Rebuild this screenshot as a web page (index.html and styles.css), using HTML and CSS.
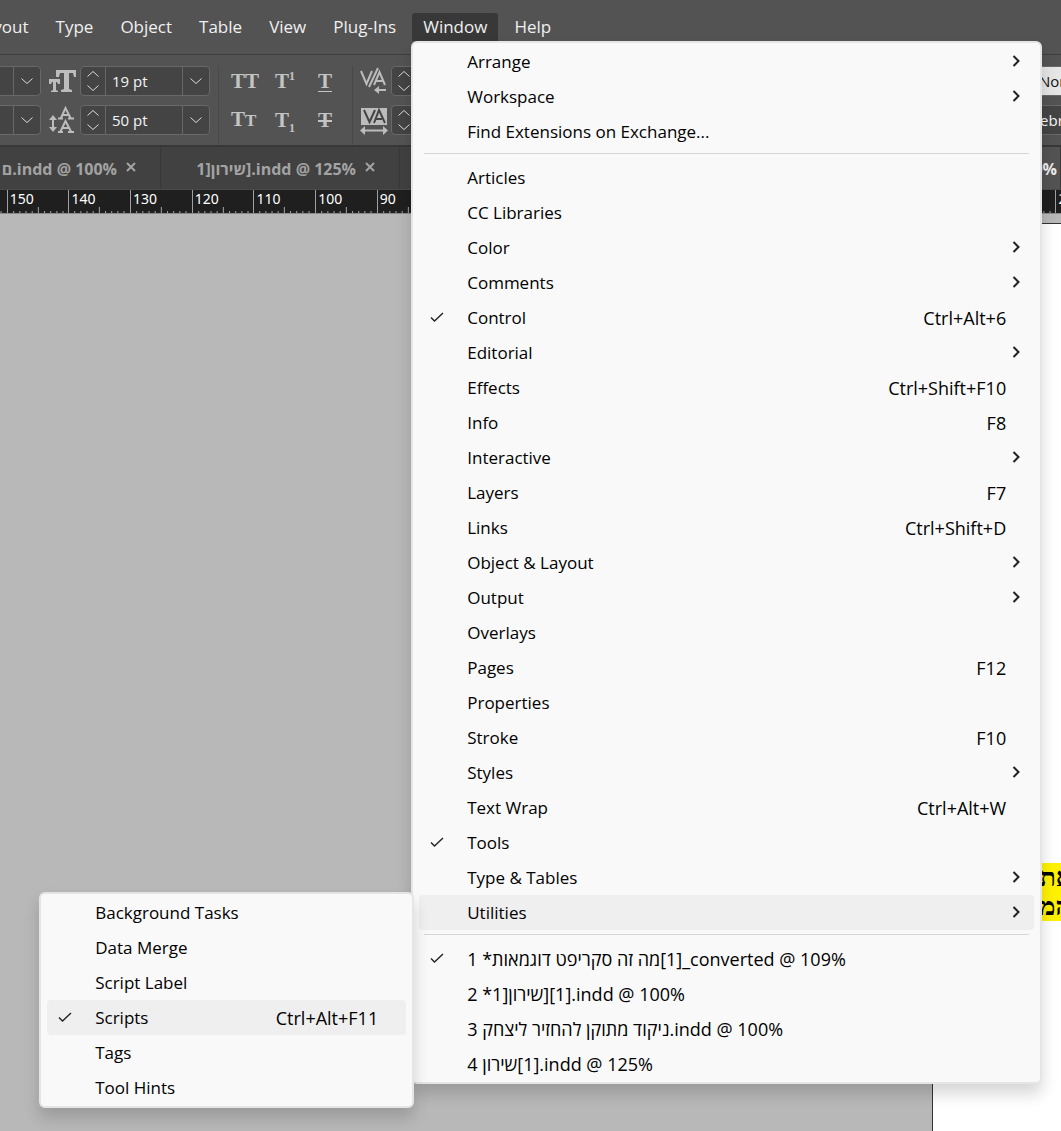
FILE: index.html
```
<!DOCTYPE html>
<html lang="en">

<head>
    <meta charset="UTF-8">
    <title>Window menu</title>
    <link rel="stylesheet" href="styles.css">
</head>

<body>
    <svg class="defs" aria-hidden="true">
        <symbol id="down" viewBox="0 0 14 8"><path d="M1.5 1.5 7 6.5l5.500-5" /></symbol>
        <symbol id="up" viewBox="0 0 14 8"><path d="M1.500 6.500 7 1.500l5.500 5" /></symbol>
        <symbol id="right" viewBox="0 0 8 12"><path d="M1.500 1 6.500 6l-5 5" /></symbol>
        <symbol id="check" viewBox="0 0 14 10"><path d="M1 5.500 4.500 9 13 1" /></symbol>
        <symbol id="close" viewBox="0 0 10 10"><path d="M1 1l8 8M9 1 1 9" /></symbol>
        <symbol id="ticks" viewBox="0 0 60 24" preserveAspectRatio="none">
            <path d="M.5 0v24M6.500 21v3M12.500 21v3M18.500 21v3M24.500 21v3M30.500 17v7M36.500 21v3M42.500 21v3M48.500 21v3M54.500 21v3" />
        </symbol>
    </svg>

    <nav class="menubar">
        <ul class="menubar-list">
            <li class="menubar-item"><button type="button">Layout</button></li>
            <li class="menubar-item"><button type="button">Type</button></li>
            <li class="menubar-item"><button type="button">Object</button></li>
            <li class="menubar-item"><button type="button">Table</button></li>
            <li class="menubar-item"><button type="button">View</button></li>
            <li class="menubar-item"><button type="button">Plug-Ins</button></li>
            <li class="menubar-item open"><button type="button">Window</button>
                <ul class="menu window-menu">
                    <li><button type="button">Arrange<svg class="arrow"><use href="#right" /></svg></button></li>
                    <li><button type="button">Workspace<svg class="arrow"><use href="#right" /></svg></button></li>
                    <li><button type="button">Find Extensions on Exchange...</button></li>
                    <li class="separator"></li>
                    <li><button type="button">Articles</button></li>
                    <li><button type="button">CC Libraries</button></li>
                    <li><button type="button">Color<svg class="arrow"><use href="#right" /></svg></button></li>
                    <li><button type="button">Comments<svg class="arrow"><use href="#right" /></svg></button></li>
                    <li><button type="button"><svg class="check"><use href="#check" /></svg>Control<kbd>Ctrl+Alt+6</kbd></button></li>
                    <li><button type="button">Editorial<svg class="arrow"><use href="#right" /></svg></button></li>
                    <li><button type="button">Effects<kbd>Ctrl+Shift+F10</kbd></button></li>
                    <li><button type="button">Info<kbd>F8</kbd></button></li>
                    <li><button type="button">Interactive<svg class="arrow"><use href="#right" /></svg></button></li>
                    <li><button type="button">Layers<kbd>F7</kbd></button></li>
                    <li><button type="button">Links<kbd>Ctrl+Shift+D</kbd></button></li>
                    <li><button type="button">Object &amp; Layout<svg class="arrow"><use href="#right" /></svg></button></li>
                    <li><button type="button">Output<svg class="arrow"><use href="#right" /></svg></button></li>
                    <li><button type="button">Overlays</button></li>
                    <li><button type="button">Pages<kbd>F12</kbd></button></li>
                    <li><button type="button">Properties</button></li>
                    <li><button type="button">Stroke<kbd>F10</kbd></button></li>
                    <li><button type="button">Styles<svg class="arrow"><use href="#right" /></svg></button></li>
                    <li><button type="button">Text Wrap<kbd>Ctrl+Alt+W</kbd></button></li>
                    <li><button type="button"><svg class="check"><use href="#check" /></svg>Tools</button></li>
                    <li><button type="button">Type &amp; Tables<svg class="arrow"><use href="#right" /></svg></button></li>
                    <li class="active"><button type="button">Utilities<svg class="arrow"><use href="#right" /></svg></button>
                        <ul class="menu submenu">
                            <li><button type="button">Background Tasks</button></li>
                            <li><button type="button">Data Merge</button></li>
                            <li><button type="button">Script Label</button></li>
                            <li class="active"><button type="button"><svg class="check"><use href="#check" /></svg>Scripts<kbd>Ctrl+Alt+F11</kbd></button></li>
                            <li><button type="button">Tags</button></li>
                            <li><button type="button">Tool Hints</button></li>
                        </ul>
                    </li>
                    <li class="separator"></li>
                    <li class="document"><button type="button"><svg class="check"><use href="#check" /></svg><span>1 *<bdi>מה זה סקריפט דוגמאות</bdi>[1]_converted @ 109%</span></button></li>
                    <li class="document"><button type="button"><span>2 *1]<bdi>שירון</bdi>][1].indd @ 100%</span></button></li>
                    <li class="document"><button type="button"><span>3 <bdi>ניקוד מתוקן להחזיר ליצחק</bdi>.indd @ 100%</span></button></li>
                    <li class="document"><button type="button"><span>4 <bdi>שירון</bdi>[1].indd @ 125%</span></button></li>
                </ul>
            </li>
            <li class="menubar-item"><button type="button">Help</button></li>
        </ul>
    </nav>

    <div class="toolbar">
        <div class="group fonts">
            <div class="field"><input type="text" aria-label="Font"><button type="button" aria-label="Choose font"><svg class="chevron"><use href="#down" /></svg></button></div>
            <div class="field"><input type="text" aria-label="Font style"><button type="button" aria-label="Choose style"><svg class="chevron"><use href="#down" /></svg></button></div>
        </div>
        <div class="group sizes">
            <div class="row">
                <label for="size" aria-label="Font size">
                    <svg class="icon" viewBox="0 0 28 28">
                        <path d="M8 3h20v7h-2l-1-4h-4v16l3 1v2h-11v-2l3-1V6h-4l-1 4H8z" />
                        <path d="M1 12h11v5h-2l-1-2H8v8l2 1v1H3v-1l2-1v-8H4l-1 2H1z" />
                    </svg>
                </label>
                <div class="field">
                    <span class="spin"><button type="button" aria-label="Larger"><svg class="chevron"><use href="#up" /></svg></button><button type="button" aria-label="Smaller"><svg class="chevron"><use href="#down" /></svg></button></span>
                    <input type="text" id="size" value="19 pt">
                    <button type="button" aria-label="Choose size"><svg class="chevron"><use href="#down" /></svg></button>
                </div>
            </div>
            <div class="row">
                <label for="leading" aria-label="Leading">
                    <svg class="icon" viewBox="0 0 28 28">
                        <path d="M5 9 9 14H6v7h3l-4 5-4-5h3v-7H1z" />
                        <path class="line" d="M10 12.500h5M20 12.500h6M10 26h5M20 26h6M13 12 17.500 2 22.500 12M14.500 9h6M12.500 25.500 17.500 15 23 25.500M14 22h7" />
                    </svg>
                </label>
                <div class="field">
                    <span class="spin"><button type="button" aria-label="More"><svg class="chevron"><use href="#up" /></svg></button><button type="button" aria-label="Less"><svg class="chevron"><use href="#down" /></svg></button></span>
                    <input type="text" id="leading" value="50 pt">
                    <button type="button" aria-label="Choose leading"><svg class="chevron"><use href="#down" /></svg></button>
                </div>
            </div>
        </div>
        <div class="group styles">
            <button type="button" class="style-button">TT</button>
            <button type="button" class="style-button">T<sup>1</sup></button>
            <button type="button" class="style-button"><span class="underlined">T</span></button>
            <button type="button" class="style-button">T<small>T</small></button>
            <button type="button" class="style-button">T<sub>1</sub></button>
            <button type="button" class="style-button"><span class="struck">T</span></button>
        </div>
        <div class="group kerning">
            <div class="row">
                <label for="kerning" aria-label="Kerning">
                    <svg class="icon" viewBox="0 0 28 28">
                        <path class="line" d="M1 4 6.500 17 12 4M9 20 18 1M14 18 19.500 5 25 18M16 14h7M18 23h8" />
                        <path d="M14 23l5-4v8z" />
                    </svg>
                </label>
                <div class="field">
                    <span class="spin"><button type="button" aria-label="More"><svg class="chevron"><use href="#up" /></svg></button><button type="button" aria-label="Less"><svg class="chevron"><use href="#down" /></svg></button></span>
                    <input type="text" id="kerning">
                </div>
            </div>
            <div class="row">
                <label for="tracking" aria-label="Tracking">
                    <svg class="icon" viewBox="0 0 28 28">
                        <path d="M1 2h26v17H1z" />
                        <path class="cut" d="M4 4 9.500 16 15 4M14 17 19 4l6 13M16 13h6" />
                        <path class="line" d="M4 24.500h20" />
                        <path d="M0 24.500 5 20v9zM28 24.500 23 20v9z" />
                    </svg>
                </label>
                <div class="field">
                    <span class="spin"><button type="button" aria-label="More"><svg class="chevron"><use href="#up" /></svg></button><button type="button" aria-label="Less"><svg class="chevron"><use href="#down" /></svg></button></span>
                    <input type="text" id="tracking">
                </div>
            </div>
        </div>
        <div class="group language">
            <select class="light" aria-label="Character style"><option>[None]</option></select>
            <select aria-label="Language"><option>Hebrew</option></select>
        </div>
    </div>

    <div class="tabs">
        <div class="tab first"><a href="#"><bdi>ם</bdi>.indd @ 100%</a><button type="button" aria-label="Close"><svg><use href="#close" /></svg></button></div>
        <div class="tab"><a href="#">1]<bdi>שירון</bdi>].indd @ 125%</a><button type="button" aria-label="Close"><svg><use href="#close" /></svg></button></div>
        <div class="tab current"><a href="#">109%</a></div>
    </div>

    <div class="ruler">
        <div class="ruler-scale">
            <span><svg><use href="#ticks" /></svg></span>
            <span><svg><use href="#ticks" /></svg>150</span>
            <span><svg><use href="#ticks" /></svg>140</span>
            <span><svg><use href="#ticks" /></svg>130</span>
            <span><svg><use href="#ticks" /></svg>120</span>
            <span><svg><use href="#ticks" /></svg>110</span>
            <span><svg><use href="#ticks" /></svg>100</span>
            <span><svg><use href="#ticks" /></svg>90</span>
            <span><svg><use href="#ticks" /></svg>80</span>
            <span><svg><use href="#ticks" /></svg>70</span>
            <span><svg><use href="#ticks" /></svg>60</span>
            <span><svg><use href="#ticks" /></svg>50</span>
            <span><svg><use href="#ticks" /></svg>40</span>
            <span><svg><use href="#ticks" /></svg>30</span>
            <span><svg><use href="#ticks" /></svg>20</span>
            <span><svg><use href="#ticks" /></svg>10</span>
            <span><svg><use href="#ticks" /></svg>0</span>
            <span><svg><use href="#ticks" /></svg>10</span>
            <span><svg><use href="#ticks" /></svg>20</span>
        </div>
    </div>

    <main class="canvas">
        <div class="page">
            <p class="marked" lang="he">את<br>המ</p>
        </div>
    </main>
</body>

</html>
```
FILE: styles.css
```
* {
    box-sizing: border-box;
}

body {
    margin: 0;
    min-height: 100vh;
    display: flex;
    flex-direction: column;
    overflow: hidden;
    background: #b8b8b8;
    font-family: "Open Sans", "Noto Sans", sans-serif;
    font-size: 17px;
    color: #000;
}

ul {
    list-style: none;
    margin: 0;
    padding: 0;
}

button,
input,
select {
    font: inherit;
    color: inherit;
    background: none;
    border: 0;
    padding: 0;
    margin: 0;
}

svg {
    display: block;
    fill: none;
    stroke: currentColor;
}

.defs {
    position: absolute;
    width: 0;
    height: 0;
}

/* menu bar */
.menubar {
    height: 55px;
    padding-top: 13px;
    background: #535353;
    border-bottom: 1px solid #3f3f3f;
}

.menubar-list {
    display: flex;
    gap: 5px;
    margin-left: -36px;
}

.menubar-item {
    position: relative;
}

.menubar-item > button {
    height: 28px;
    padding: 0 11px;
    line-height: 28px;
    color: #f0f0f0;
}

.menubar-item.open > button {
    background: #383838;
    border-radius: 3px 3px 0 0;
}

/* drop-down menus */
.menu {
    position: absolute;
    z-index: 1;
    padding: 1px 6px;
    background: #f9f9f9;
    border: 2px solid #e5e5e5;
    border-radius: 6px;
    box-shadow: 0 10px 16px rgba(0, 0, 0, 0.16);
}

.window-menu {
    top: 100%;
    left: -1px;
    width: 631px;
}

.submenu {
    top: -3px;
    right: calc(100% + 5px);
    width: 375px;
}

.menu li {
    position: relative;
}

.menu button {
    display: flex;
    align-items: center;
    width: 100%;
    height: 35px;
    padding: 0 28px 0 48px;
    border-radius: 4px;
    text-align: left;
    white-space: nowrap;
}

.menu .active > button {
    background: #efefef;
}

.menu kbd {
    margin-left: auto;
    font-family: inherit;
    font-size: 18px;
}

.menu .document {
    font-size: 18px;
}

.menu .separator {
    height: 11px;
    padding: 4px 5px 0;
}

.separator::before {
    content: "";
    display: block;
    height: 1px;
    background: #d6d6d6;
}

.arrow {
    width: 8px;
    height: 12px;
    margin: 0 -14px 2px auto;
    stroke: #222;
    stroke-width: 2px;
}

.check {
    width: 14px;
    height: 10px;
    margin: 0 23px 2px -37px;
    stroke: #222;
    stroke-width: 1.4;
}

/* control strip */
.toolbar {
    display: flex;
    height: 90px;
    padding-top: 11px;
    overflow: hidden;
    background: #535353;
    color: #f5f5f5;
    font-size: 15px;
}

.group {
    display: grid;
    grid-template-rows: 30px 30px;
    gap: 9px;
    flex: none;
}

.row {
    display: flex;
    gap: 4px;
}

.field {
    display: flex;
    height: 30px;
    background: #444;
    border: 1px solid #686868;
    border-radius: 4px;
}

.field input {
    width: 77px;
    padding: 0 6px;
    border-left: 1px solid #686868;
}

.field > button {
    display: grid;
    place-items: center;
    width: 27px;
    border-left: 1px solid #686868;
}

.chevron {
    width: 14px;
    height: 8px;
    stroke: #dcdcdc;
}

.spin {
    display: flex;
    flex-direction: column;
    justify-content: space-between;
    width: 24px;
    padding: 3px 5px;
}

.fonts {
    margin-left: -65px;
}

.sizes {
    margin-left: 7px;
    padding-right: 8px;
    border-right: 1px solid #494949;
}

.icon {
    width: 28px;
    height: 30px;
    fill: #bcbcbc;
    stroke: none;
}

.icon .line {
    fill: none;
    stroke: #bcbcbc;
    stroke-width: 2px;
}

.icon .cut {
    fill: none;
    stroke: #444;
    stroke-width: 2px;
}

.styles {
    grid-template-columns: 44px 43px 46px;
    column-gap: 0;
    padding-left: 12px;
    margin-right: 7px;
    width: 134px;
    border-right: 1px solid #494949;
}

.kerning .row {
    gap: 3px;
}

.style-button {
    height: 30px;
    text-align: left;
    line-height: 28px;
    font-family: "Liberation Serif", serif;
    font-size: 21px;
    font-weight: bold;
    color: #c4c4c4;
}

.style-button sup,
.style-button sub {
    font-size: 12px;
    line-height: 0;
}

.style-button small {
    font-size: 17px;
}

.underlined {
    display: inline-block;
    line-height: 19px;
    border-bottom: 1px solid #c4c4c4;
}

.struck {
    text-decoration: line-through;
}

.language {
    width: 120px;
    margin-left: auto;
    margin-right: -81px;
}

.language select {
    appearance: none;
    width: 120px;
    height: 30px;
    padding-left: 6px;
    background: #444;
    border: 1px solid #686868;
}

.language .light {
    padding-left: 11px;
    background: #e6e6e6;
    color: #111;
}

/* document tabs */
.tabs {
    display: flex;
    height: 45px;
    background: #414141;
    border-top: 2px solid #383838;
    border-bottom: 1px solid #4a4a4a;
    overflow: hidden;
    color: #a3a3a3;
    font-size: 16px;
    font-weight: bold;
}

.tab {
    display: flex;
    flex: none;
    align-items: center;
    justify-content: flex-end;
    gap: 9px;
    width: 239px;
    padding: 2px 24px 0 0;
    border-right: 1px solid #383838;
    white-space: nowrap;
}

.tab.first {
    margin-left: -78px;
}

.tab.current {
    margin-left: auto;
    width: 80px;
    padding-right: 3px;
    background: #535353;
    color: #eee;
}

.tab a {
    color: inherit;
    text-decoration: none;
}

.tab svg {
    width: 10px;
    height: 10px;
    margin-bottom: 4px;
    stroke-width: 2px;
}

/* ruler */
.ruler {
    height: 24px;
    overflow: hidden;
    background: #1f1f1f;
    border-bottom: 1px solid #8c8c8c;
    color: #fff;
    font-family: "Noto Sans", sans-serif;
    font-size: 14px;
}

.ruler-scale {
    display: flex;
    width: calc(100% + 111px);
    margin-left: -55px;
}

.ruler-scale span {
    position: relative;
    flex: 1;
    padding-left: 3px;
    line-height: 18px;
}

.ruler-scale svg {
    position: absolute;
    top: 0;
    left: 0;
    width: 100%;
    height: 24px;
    stroke: #a0a0a0;
}

/* pasteboard */
.canvas {
    display: flex;
    flex: 1;
    justify-content: flex-end;
    padding-top: 9px;
}

.page {
    width: 129px;
    overflow: hidden;
    background: #fff;
    border-top: 1px solid #333;
    border-left: 1px solid #333;
}

.marked {
    margin: 639px 0 0 107px;
    background: #fff200;
    font-family: "Liberation Serif", serif;
    font-size: 26px;
    font-weight: bold;
    line-height: 29px;
    white-space: nowrap;
}
```
